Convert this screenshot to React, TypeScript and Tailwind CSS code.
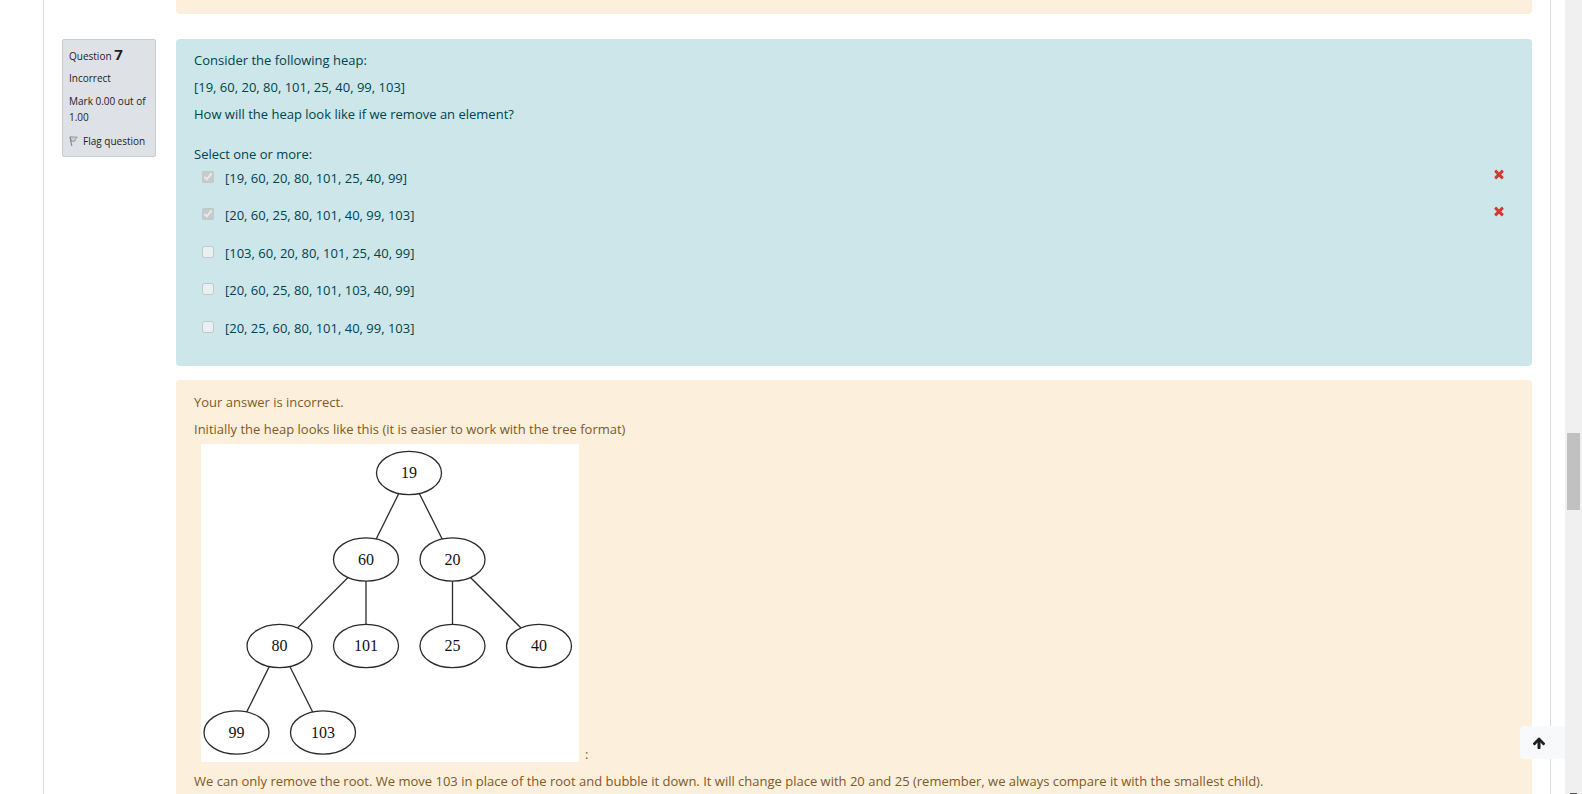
import type { ReactNode } from "react";

type Point = { label: string; x: number; y: number };

const nodes: Point[] = [
  { label: "19", x: 208, y: 29 },
  { label: "60", x: 165, y: 115.5 },
  { label: "20", x: 251.5, y: 115.5 },
  { label: "80", x: 78.5, y: 202 },
  { label: "101", x: 165, y: 202 },
  { label: "25", x: 251.5, y: 202 },
  { label: "40", x: 338, y: 202 },
  { label: "99", x: 35.5, y: 288.5 },
  { label: "103", x: 122, y: 288.5 },
];

const answers = [
  { text: "[19, 60, 20, 80, 101, 25, 40, 99]", checked: true },
  { text: "[20, 60, 25, 80, 101, 40, 99, 103]", checked: true },
  { text: "[103, 60, 20, 80, 101, 25, 40, 99]", checked: false },
  { text: "[20, 60, 25, 80, 101, 103, 40, 99]", checked: false },
  { text: "[20, 25, 60, 80, 101, 40, 99, 103]", checked: false },
];

function HeapTree() {
  return (
    <svg width="378" height="318" viewBox="0 0 378 318" className="ml-[7px] shrink-0 bg-white" role="img" aria-label="Heap drawn as a tree">
      <g stroke="#2b2b2b" strokeWidth="1.3" fill="none">
        {nodes.slice(1).map((n, i) => {
          const parent = nodes[Math.floor(i / 2)];
          return <line key={n.label} x1={parent.x} y1={parent.y} x2={n.x} y2={n.y} />;
        })}
        {nodes.map((n) => (
          <ellipse key={n.label} cx={n.x} cy={n.y} rx="32.5" ry="21.7" fill="#fff" />
        ))}
      </g>
      <g fill="#111" fontSize="16" textAnchor="middle" fontFamily="'Liberation Serif', serif">
        {nodes.map((n) => (
          <text key={n.label} x={n.x} y={n.y + 5}>
            {n.label}
          </text>
        ))}
      </g>
    </svg>
  );
}

function WrongIcon() {
  return (
    <svg viewBox="0 0 1792 1792" className="mt-0.5 size-3.5 fill-[#d03a34]" role="img" aria-label="Incorrect">
      <path d="M1490 1322q0 40-28 68l-136 136q-28 28-68 28t-68-28l-294-294-294 294q-28 28-68 28t-68-28l-136-136q-28-28-28-68t28-68l294-294-294-294q-28-28-28-68t28-68l136-136q28-28 68-28t68 28l294 294 294-294q28-28 68-28t68 28l136 136q28 28 28 68t-28 68l-294 294 294 294q28 28 28 68z" />
    </svg>
  );
}

function Feedback({ children }: { children?: ReactNode }) {
  return <section className="min-h-5 rounded bg-[#fcefdc] px-[18px] pt-[11px] text-[#7d5a29]">{children}</section>;
}

export default function App() {
  return (
    <div className="flex h-screen overflow-hidden bg-white font-['Open_Sans','Noto_Sans',sans-serif] text-[13px] leading-[22px]">
      <main className="mr-3.5 ml-[43px] min-w-0 flex-1 border-x border-[#d9dbde] px-[18px]">
        <div className="-mt-1.5 ml-[114px]">
          <Feedback />
        </div>
        <div className="mt-[25px] flex items-start gap-5">
          <aside className="w-[94px] shrink-0 rounded-xs border border-[#c5cdd3] bg-[#dee2e6] px-1.5 pt-[5px] pb-[7px] text-[10px] leading-4 text-[#1d2125]">
            <h3 className="leading-[18px]">
              Question <span className="text-[15px] font-bold">7</span>
            </h3>
            <p className="mt-[5px]">Incorrect</p>
            <p className="mt-[7px]">Mark 0.00 out of 1.00</p>
            <a href="#flag" className="mt-2 flex items-center gap-[5px] whitespace-nowrap">
              <svg viewBox="0 0 9 10" className="h-2.5 w-[9px] shrink-0" fill="#cdd0d4" stroke="#85898e" aria-hidden="true">
                <path d="M1 .8 8.4 1.2 6 3.4 6.2 5 2.3 5.4z" strokeWidth=".8" />
                <path d="M1 .8 2.8 9.8" strokeWidth="1.2" />
              </svg>
              Flag question
            </a>
          </aside>
          <div className="min-w-0 flex-1">
            <section className="rounded bg-[#cce6ea] px-[18px] pt-2.5 pb-3.5 text-[#00434e]">
              <p>Consider the following heap:</p>
              <p className="mt-[5px]">[19, 60, 20, 80, 101, 25, 40, 99, 103]</p>
              <p className="mt-[5px]">How will the heap look like if we remove an element?</p>
              <fieldset className="mt-[18px]">
                <legend>Select one or more:</legend>
                <div className="grid h-[187px] grid-rows-5">
                  {answers.map((a, i) => (
                    <div key={a.text} className="flex items-start justify-between pr-2 pl-2">
                      <div className="flex items-start gap-[11px] pt-0.5">
                        <input id={`answer-${i}`} type="checkbox" disabled defaultChecked={a.checked} className="mt-1 size-3" />
                        <label htmlFor={`answer-${i}`}>{a.text}</label>
                      </div>
                      {a.checked && <WrongIcon />}
                    </div>
                  ))}
                </div>
              </fieldset>
            </section>
            <div className="mt-3.5">
              <Feedback>
                <p>Your answer is incorrect.</p>
                <p className="mt-[5px]">Initially the heap looks like this (it is easier to work with the tree format)</p>
                <div className="mt-1 flex items-end gap-1.5">
                  <HeapTree />
                  <p className="leading-4">:</p>
                </div>
                <p className="mt-2 pb-10">
                  We can only remove the root. We move 103 in place of the root and bubble it down. It will change place with 20 and 25 (remember, we always compare it with the smallest child).
                </p>
              </Feedback>
            </div>
          </div>
        </div>
      </main>
      <div className="flex w-[17px] shrink-0 flex-col items-center justify-between bg-[#f0f0f0] px-0.5 pt-[433px]" aria-hidden="true">
        <div className="h-[77px] w-full bg-[#c1c1c1]" />
        <div className="h-px w-[7px] bg-[#505050]" />
      </div>
      <button type="button" aria-label="Back to top" className="fixed right-[17px] bottom-[35px] flex h-[33px] w-[45px] items-center rounded-l bg-[#f8f9fa] pl-3">
        <svg viewBox="0 0 1792 1792" className="size-3.5 fill-[#1d2125]" aria-hidden="true">
          <path d="M1675 971q0 51-37 90l-75 75q-38 38-91 38-54 0-90-38l-294-293v704q0 52-37.5 84.5t-90.5 32.5h-128q-53 0-90.5-32.5t-37.5-84.5v-704l-294 293q-36 38-90 38t-90-38l-75-75q-38-38-38-90 0-53 38-91l651-651q35-37 90-37 54 0 91 37l651 651q37 39 37 91z" />
        </svg>
      </button>
    </div>
  );
}
